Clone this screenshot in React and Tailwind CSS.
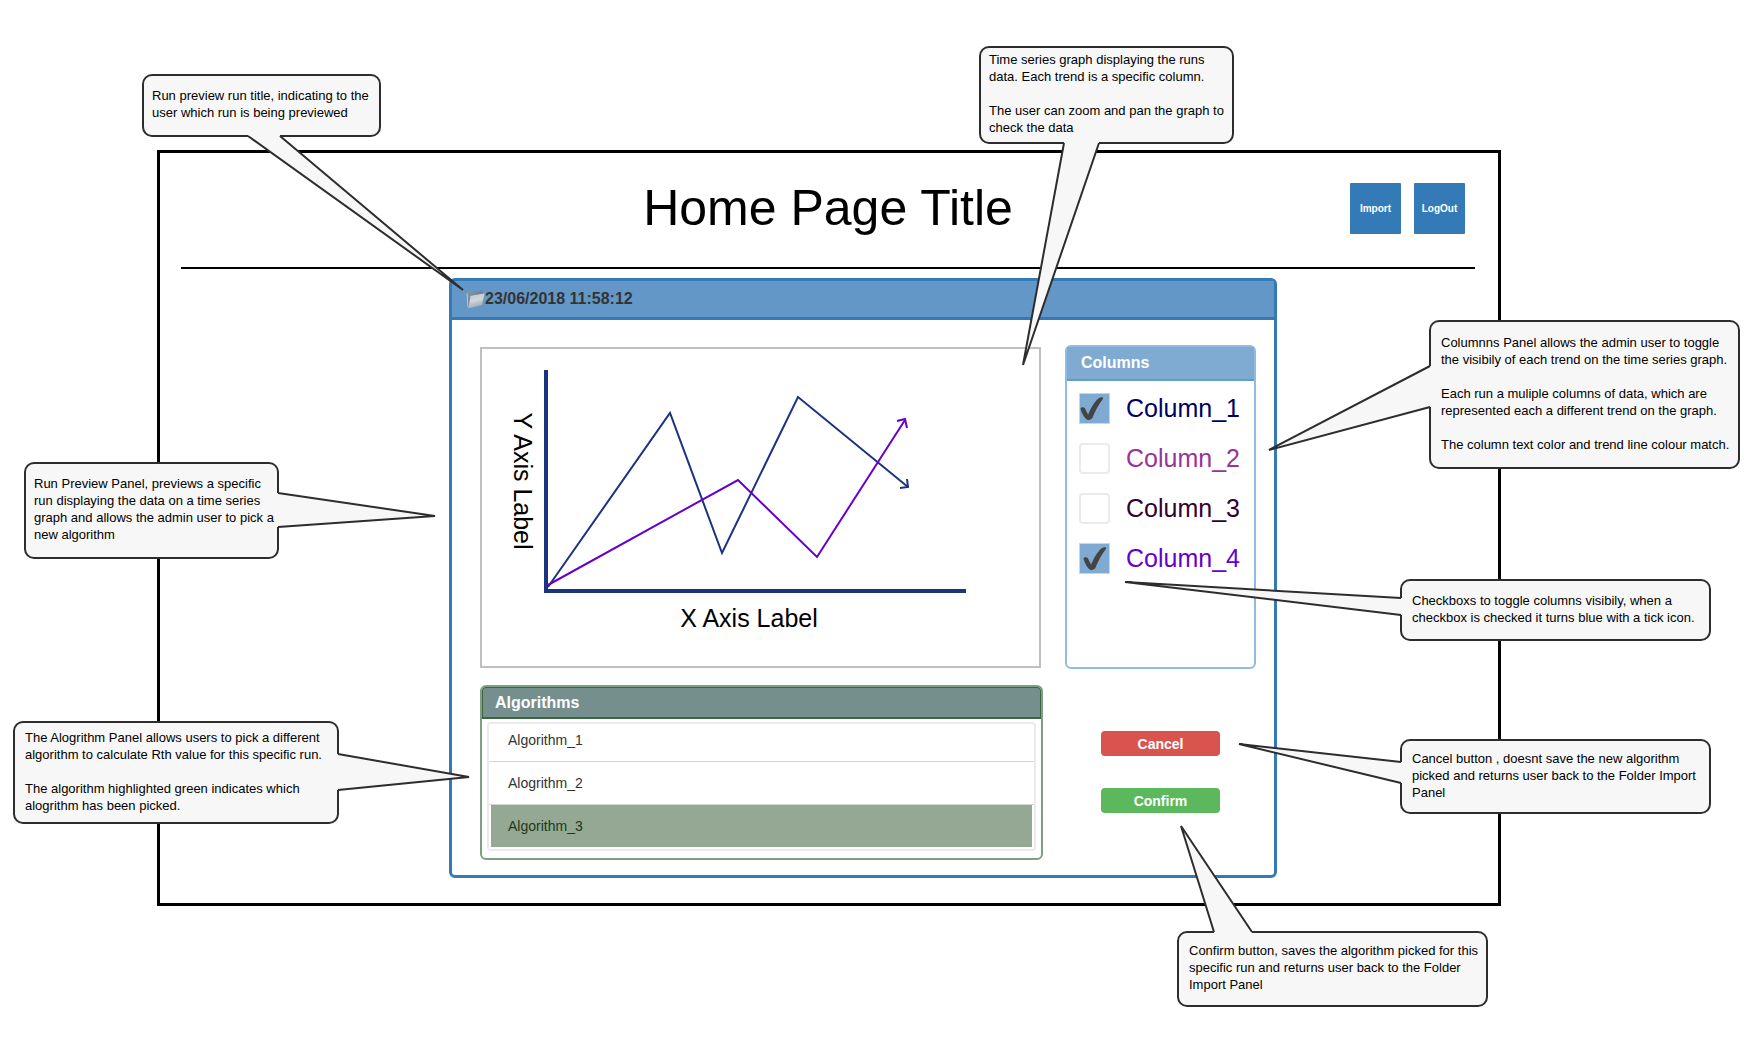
import { useState } from "react";

const CALLOUTS = [
  {
    id: "title",
    box: "left-[142px] top-[74px] w-[239px] min-h-[63px] px-2",
    text: "Run preview run title, indicating to the\nuser which run is being previewed",
    from: [106, 62],
    tip: [321, 216],
    to: [138, 62],
    inset: [0, -3],
  },
  {
    id: "graph",
    box: "right-[510px] top-[46px] w-[255px] min-h-[98px] px-2",
    text:
      "Time series graph displaying the runs\ndata. Each trend is a specific column.\n\nThe user can zoom and pan the graph to\ncheck the data",
    from: [85, 97],
    tip: [44, 319],
    to: [120, 97],
    inset: [0, -3],
  },
  {
    id: "columns",
    box: "right-1 top-[320px] w-[311px] min-h-[149px] px-2.5",
    text:
      "Columnns Panel allows the admin user to toggle\nthe visibily of each trend on the time series graph.\n\nEach run a muliple columns of data, which are\nrepresented each a different trend on the graph.\n\nThe column text color and trend line colour match.",
    from: [1, 46],
    tip: [-160, 130],
    to: [1, 87],
    inset: [3, 0],
  },
  {
    id: "checkboxes",
    box: "right-[33px] top-[579px] w-[311px] min-h-[62px] px-2.5",
    text: "Checkboxs to toggle columns visibily, when a\ncheckbox is checked it turns blue with a tick icon.",
    from: [1, 19],
    tip: [-275, 3],
    to: [1, 36],
    inset: [3, 0],
  },
  {
    id: "panel",
    box: "left-6 top-[462px] w-[255px] min-h-[97px] px-2",
    text:
      "Run Preview Panel, previews a specific\nrun displaying the data on a time series\ngraph and allows the admin user to pick a\nnew algorithm",
    from: [254, 31],
    tip: [411, 54],
    to: [254, 65],
    inset: [-3, 0],
  },
  {
    id: "algorithms",
    box: "left-[13px] top-[721px] w-[326px] min-h-[103px] px-2.5",
    text:
      "The Alogrithm Panel allows users to pick a different\nalgorithm to calculate Rth value for this specific run.\n\nThe algorithm highlighted green indicates which\nalogrithm has been picked.",
    from: [325, 33],
    tip: [456, 56],
    to: [325, 69],
    inset: [-3, 0],
  },
  {
    id: "cancel",
    box: "right-[33px] top-[739px] w-[311px] min-h-[75px] px-2.5",
    text: "Cancel button , doesnt save the new algorithm\npicked and returns user back to the Folder Import\nPanel",
    from: [1, 23],
    tip: [-161, 5],
    to: [1, 44],
    inset: [3, 0],
  },
  {
    id: "confirm",
    box: "right-64 top-[931px] w-[311px] min-h-[76px] px-2.5",
    text: "Confirm button, saves the algorithm picked for this\nspecific run and returns user back to the Folder\nImport Panel",
    from: [37, 1],
    tip: [4, -105],
    to: [75, 1],
    inset: [0, 3],
  },
];

function Callout({ box, text, from, tip, to, inset }) {
  const inner = (p) => [p[0] + inset[0], p[1] + inset[1]];
  const fill = [inner(from), from, tip, to, inner(to)].map((p) => p.join(",")).join(" ");
  const edge = [from, tip, to].map((p) => p.join(",")).join(" ");
  return (
    <aside
      className={`absolute flex items-center rounded-[10px] border-2 border-[#2d2d2d] bg-[#f7f7f7] pb-[3px] ${box}`}
    >
      <svg className="pointer-events-none absolute -left-0.5 -top-0.5 size-px overflow-visible" aria-hidden="true">
        <polygon points={fill} fill="#f7f7f7" />
        <polyline points={edge} fill="none" stroke="#2d2d2d" strokeWidth="2" />
      </svg>
      <p className="relative whitespace-pre text-[13px] leading-[17px] text-black">{text}</p>
    </aside>
  );
}

function FolderIcon() {
  return (
    <svg className="size-[19px]" viewBox="0 0 19 19" aria-hidden="true">
      <defs>
        <linearGradient id="folderFront" x1="0" y1="0" x2="0.3" y2="1">
          <stop offset="0" stopColor="#b9c1c8" />
          <stop offset="0.5" stopColor="#d2d7db" />
          <stop offset="1" stopColor="#a3aab1" />
        </linearGradient>
        <linearGradient id="folderBack" x1="0" y1="0" x2="1" y2="1">
          <stop offset="0" stopColor="#8b99a5" />
          <stop offset="1" stopColor="#5a6d7d" />
        </linearGradient>
      </defs>
      <path d="M0.6 2.6 L1.4 1.6 L6 1 L7 1.8 L15.6 0.4 L16.6 1.2 L16.8 5 L3 17.6 L1.4 17.4 Z" fill="url(#folderBack)" />
      <path d="M1 3.4 L2 17.2" stroke="#c4cbd1" strokeWidth="1" />
      <path d="M4.4 6.4 L18.4 4 L16 15 L2.4 18.4 Z" fill="url(#folderFront)" />
      <path d="M4.4 6.4 L18.4 4" stroke="#dde1e4" strokeWidth="0.8" />
    </svg>
  );
}

function Chart() {
  return (
    <svg className="h-full w-full" viewBox="0 0 557 317" role="img" aria-label="Time series graph">
      <g fill="none" stroke="#1c3380">
        <path d="M64 21 V244" strokeWidth="4" />
        <path d="M62 242 H484" strokeWidth="4" />
        <path d="M66 238 L188 64 L240 204 L316 48 L426 138" strokeWidth="2" />
        <path d="M418 139 L426 138 L425 130" strokeWidth="2" />
      </g>
      <g fill="none" stroke="#6600cc" strokeWidth="2">
        <path d="M66 236 L256 131 L335 208 L423 71" />
        <path d="M415 72 L423 70 L425 79" />
      </g>
      <g fill="#000" fontSize="25" textAnchor="middle">
        <text x="267" y="278">X Axis Label</text>
        <text transform="translate(32 132) rotate(90)">Y Axis Label</text>
      </g>
    </svg>
  );
}

const COLUMNS = [
  { name: "Column_1", color: "text-[#000066]", tick: "left-0" },
  { name: "Column_2", color: "text-[#993399]", tick: "left-0" },
  { name: "Column_3", color: "text-[#330033]", tick: "left-0" },
  { name: "Column_4", color: "text-[#6600cc]", tick: "left-[3px]" },
];

function ColumnToggle({ name, color, tick, checked, onChange }) {
  return (
    <label className="flex items-center gap-4">
      <span className="relative block size-[31px]">
        <input
          type="checkbox"
          checked={checked}
          onChange={onChange}
          className="block size-[31px] appearance-none rounded-sm border-2 border-[#ebebeb] bg-white checked:rounded-none checked:border checked:border-[#c5d6e5] checked:bg-[#7fabd2]"
        />
        {checked && (
          <svg
            className={`pointer-events-none absolute top-0 size-[31px] ${tick}`}
            viewBox="0 0 31 31"
            fill="#444"
            aria-hidden="true"
          >
            <path d="M1.4 15.6 C2.6 13.8 5.2 13.8 6.2 15.8 C7 17.6 7.8 19.6 9.2 21.4 C12 14.6 15.4 8.6 19.4 5.4 C20.8 4.4 22.6 4 23.9 4.4 C24.3 4.8 24.2 5.4 23.7 6.2 C19.6 11.6 16 18.4 13.6 24.4 C12.8 26.4 10.4 27.3 8.2 26.7 C5.2 25.2 3 20.6 1.4 15.6 Z" />
          </svg>
        )}
      </span>
      <span className={`text-[25px] leading-[31px] ${color}`}>{name}</span>
    </label>
  );
}

const ALGORITHMS = ["Algorithm_1", "Alogrithm_2", "Algorithm_3"];
const ROW_HEIGHTS = ["h-[38px] border-b pb-1.5", "h-[43px] border-b", "h-11"];

export default function App() {
  const [shown, setShown] = useState({ Column_1: true, Column_4: true });
  const [picked, setPicked] = useState("Algorithm_3");

  return (
    <div className="relative min-h-screen bg-white pt-[150px] pr-[243px] pb-[150px] pl-[157px] font-['Liberation_Sans',Arial,sans-serif] text-black">
      <main className="border-[3px] border-black pb-[25px]">
        <header className="mr-[23px] ml-[21px] grid h-[116px] grid-cols-[1fr_auto_1fr] items-center border-b-2 border-black pb-1">
          <h1 className="col-start-2 text-[50px] leading-[58px]">Home Page Title</h1>
          <nav className="flex justify-end gap-[13px] pr-2.5">
            <button type="button" className="size-[51px] rounded-[1px] bg-[#337ab7] text-[10px] font-bold text-white">
              Import
            </button>
            <button type="button" className="size-[51px] rounded-[1px] bg-[#337ab7] text-[10px] font-bold text-white">
              LogOut
            </button>
          </nav>
        </header>

        <section className="mt-[9px] mr-[221px] ml-[289px] rounded-md border-[3px] border-[#337ab7]">
          <h2 className="flex h-[39px] items-center border-b-[3px] border-[#337ab7] bg-[#6397c8] pl-3.5 text-base font-bold text-[#333]">
            <FolderIcon />
            23/06/2018 11:58:12
          </h2>

          <div className="grid grid-cols-[1fr_191px] gap-x-[22px] gap-y-4 pt-[25px] pr-[18px] pb-[15px] pl-7">
            <div className="mt-0.5 mr-0.5 mb-px h-[321px] border-2 border-[#bfbfbf]">
              <Chart />
            </div>

            <section className="rounded-md border-2 border-[#93bbdf]">
              <h3 className="flex h-[34px] items-center border-b-2 border-[#5f9dd0] bg-[#7fabd2] pl-3.5 text-base font-bold text-white">
                Columns
              </h3>
              <div className="flex flex-col gap-[19px] pt-3 pl-3">
                {COLUMNS.map((column) => (
                  <ColumnToggle
                    key={column.name}
                    {...column}
                    checked={Boolean(shown[column.name])}
                    onChange={() => setShown({ ...shown, [column.name]: !shown[column.name] })}
                  />
                ))}
              </div>
            </section>

            <section className="rounded-md border-2 border-[#7f9f82]">
              <h3 className="flex h-8 items-center rounded-t-sm border border-b-2 border-[#3b6640] bg-[#758f8f] pl-3 text-base font-bold text-white">
                Algorithms
              </h3>
              <div className="mx-[5px] mt-[3px] mb-[7px] rounded border-2 border-[#ebebeb]">
                {ALGORITHMS.map((name, index) => (
                  <button
                    key={name}
                    type="button"
                    aria-pressed={picked === name}
                    onClick={() => setPicked(name)}
                    className={`flex w-full items-center border-[#d5d5d5] text-left text-sm ${ROW_HEIGHTS[index]} ${
                      picked === name
                        ? "border-x-2 border-b-2 border-x-white border-b-white bg-[#94a894] pl-[17px] text-[#1d3820]"
                        : "pl-[19px] text-[#333]"
                    }`}
                  >
                    {name}
                  </button>
                ))}
              </div>
            </section>

            <div className="flex flex-col items-center gap-8 pt-[46px]">
              <button type="button" className="h-[25px] w-[119px] rounded-sm bg-[#d9534f] text-sm font-bold text-white">
                Cancel
              </button>
              <button type="button" className="h-[25px] w-[119px] rounded-sm bg-[#5cb85c] text-sm font-bold text-white">
                Confirm
              </button>
            </div>
          </div>
        </section>
      </main>

      {CALLOUTS.map(({ id, ...callout }) => (
        <Callout key={id} {...callout} />
      ))}
    </div>
  );
}
